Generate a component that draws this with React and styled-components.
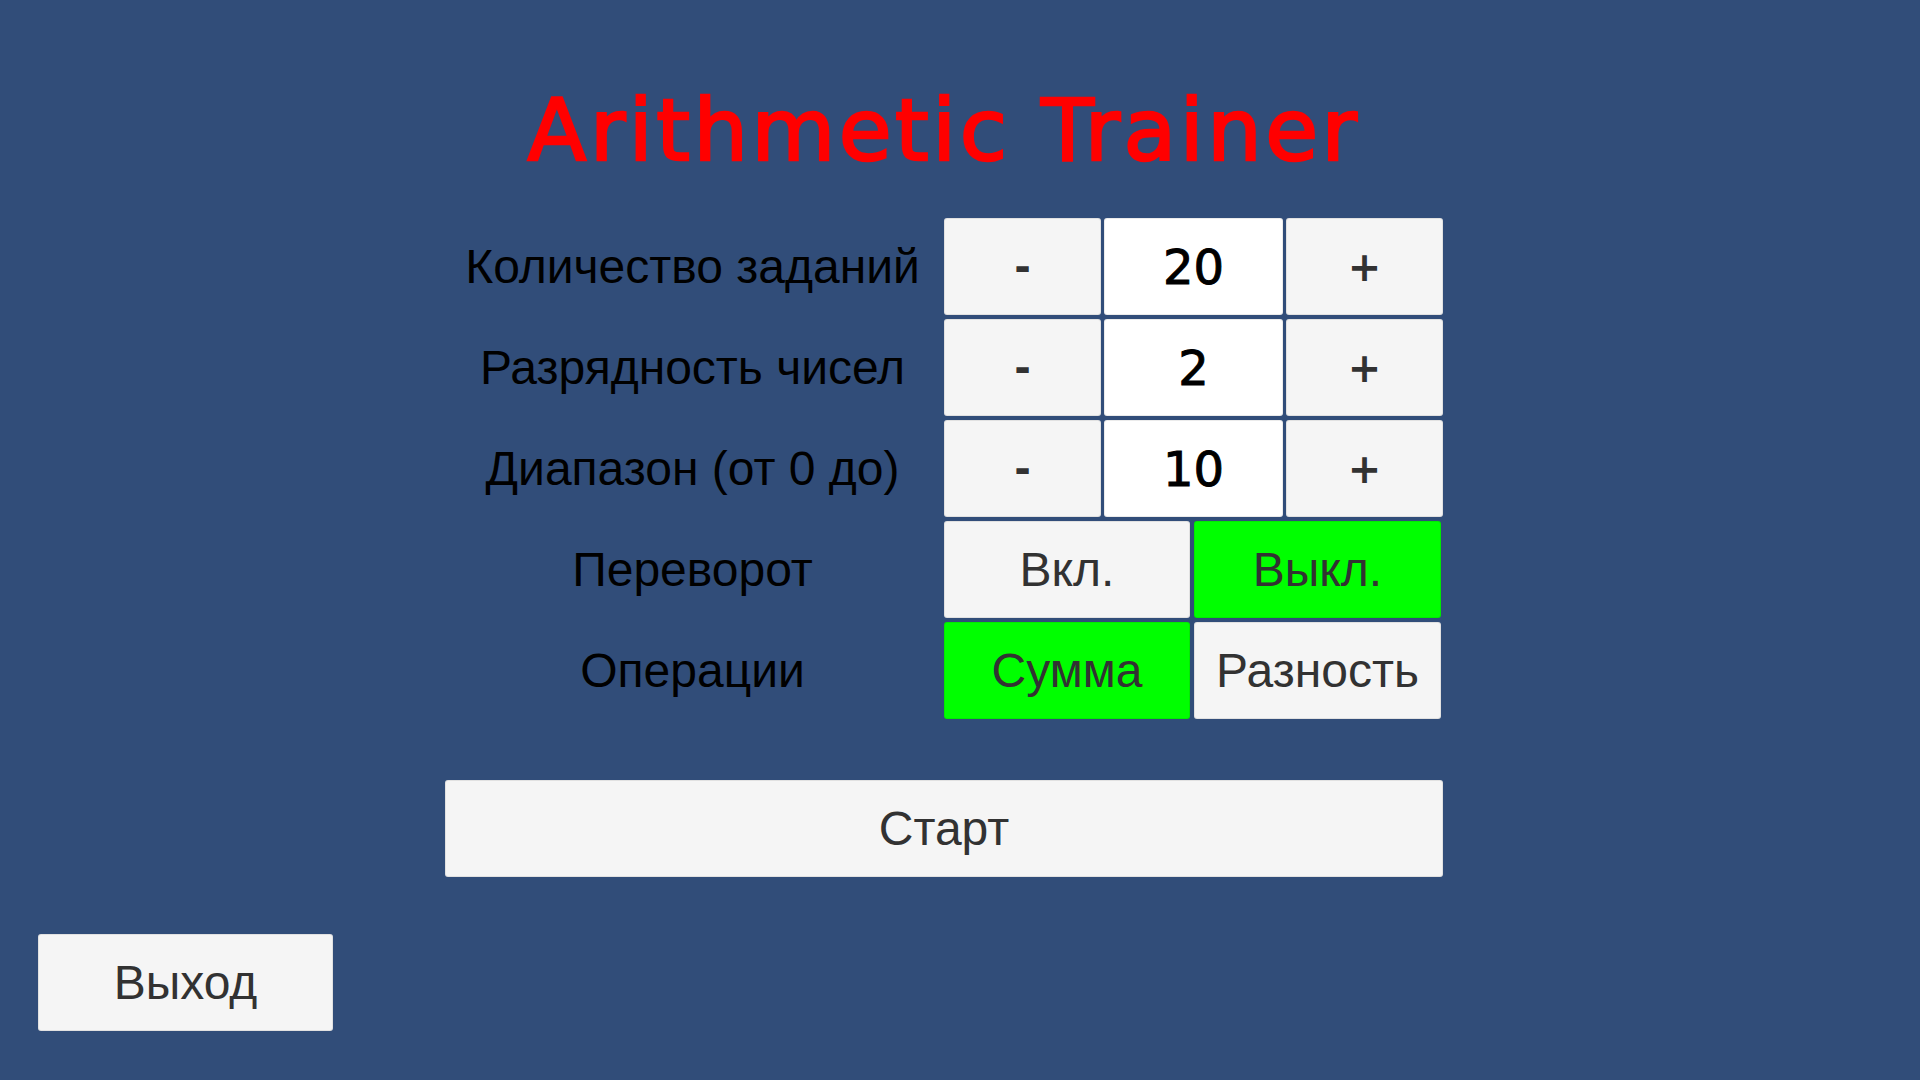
import React from "react";
import styled, { createGlobalStyle } from "styled-components";

const GlobalStyle = createGlobalStyle`
  html, body {
    margin: 0;
    padding: 0;
    background: #314d79;
  }
  body {
    font-family: "Liberation Sans", Arial, sans-serif;
  }
`;

const Screen = styled.div`
  width: 1920px;
  height: 1080px;
  background: #314d79;
  overflow: hidden;
  display: flex;
  flex-direction: column;
  padding-top: 87px;
  box-sizing: border-box;
`;

const Content = styled.div`
  width: 998px;
  margin-left: 445px;
  display: flex;
  flex-direction: column;
`;

const Title = styled.h1`
  margin: 0;
  font-family: "DejaVu Sans", sans-serif;
  font-weight: 400;
  font-size: 86px;
  line-height: 1;
  letter-spacing: 3.5px;
  color: #ff0000;
  -webkit-text-stroke: 2.5px #ff0000;
  text-align: center;
`;

const Form = styled.div`
  margin-top: 45px;
  display: grid;
  grid-template-columns: 495px 499px;
  grid-auto-rows: 97px;
  column-gap: 4px;
  row-gap: 4px;
`;

const Label = styled.div`
  display: flex;
  align-items: center;
  justify-content: center;
  font-size: 48px;
  color: #000;
  white-space: nowrap;
`;

const Stepper = styled.div`
  display: grid;
  grid-template-columns: 157px 179px 157px;
  column-gap: 3px;
`;

const Toggle = styled.div`
  display: grid;
  grid-template-columns: 246px 247px;
  column-gap: 4px;
`;

const Button = styled.button`
  display: flex;
  align-items: center;
  justify-content: center;
  margin: 0;
  padding: 0;
  border: 1px solid rgba(0, 0, 0, 0.08);
  border-radius: 3px;
  background: ${(p) => (p.$active ? "#00ff00" : "#f5f5f5")};
  color: #323232;
  font-family: "Liberation Sans", Arial, sans-serif;
  font-size: 48px;
  cursor: pointer;
`;

const StepButton = styled(Button)`
  font-family: "DejaVu Sans", sans-serif;
  font-size: 40px;
  font-weight: 700;
`;

const Value = styled.div`
  display: flex;
  align-items: center;
  justify-content: center;
  background: #ffffff;
  border: 1px solid rgba(0, 0, 0, 0.08);
  border-radius: 3px;
  font-family: "DejaVu Sans", sans-serif;
  font-size: 48px;
  color: #000;
  -webkit-text-stroke: 1px #000;
`;

const StartButton = styled(Button)`
  margin-top: 61px;
  height: 97px;
  width: 998px;
`;

const ExitButton = styled(Button)`
  margin-top: 57px;
  margin-left: 38px;
  width: 295px;
  height: 97px;
`;

const steppers = [
  { label: "Количество заданий", value: 20 },
  { label: "Разрядность чисел", value: 2 },
  { label: "Диапазон (от 0 до)", value: 10 },
];

export default function App() {
  return (
    <Screen>
      <GlobalStyle />
      <Content>
        <Title>Arithmetic Trainer</Title>
        <Form>
          {steppers.map((s) => (
            <React.Fragment key={s.label}>
              <Label>{s.label}</Label>
              <Stepper>
                <StepButton>-</StepButton>
                <Value>{s.value}</Value>
                <StepButton>+</StepButton>
              </Stepper>
            </React.Fragment>
          ))}
          <Label>Переворот</Label>
          <Toggle>
            <Button>Вкл.</Button>
            <Button $active>Выкл.</Button>
          </Toggle>
          <Label>Операции</Label>
          <Toggle>
            <Button $active>Сумма</Button>
            <Button>Разность</Button>
          </Toggle>
        </Form>
        <StartButton>Старт</StartButton>
      </Content>
      <ExitButton>Выход</ExitButton>
    </Screen>
  );
}
